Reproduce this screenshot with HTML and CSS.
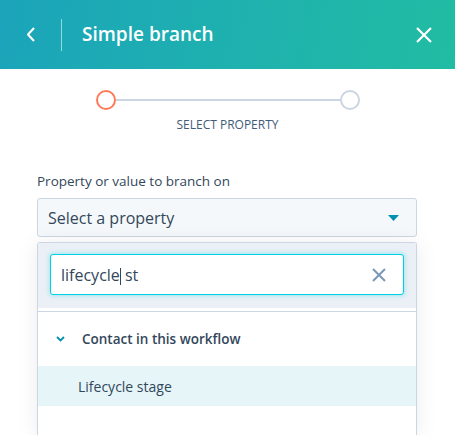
FILE: index.html
```html
<!DOCTYPE html>
<html lang="en">
<head>
<meta charset="utf-8">
<title>Simple branch</title>
<link rel="stylesheet" href="styles.css">
</head>
<body>
<header class="header">
  <button class="back" aria-label="Back">
    <svg width="8" height="15" viewBox="0 0 8 15"><path d="M7 1 L1 7.5 L7 14" fill="none" stroke="#fff" stroke-width="2" stroke-linejoin="miter"/></svg>
  </button>
  <span class="divider"></span>
  <h1 class="title">Simple branch</h1>
  <button class="close" aria-label="Close">
    <svg width="16" height="16" viewBox="0 0 16 16"><path d="M1 1 L15 15 M15 1 L1 15" stroke="#fff" stroke-width="2.2" fill="none"/></svg>
  </button>
</header>
<main class="panel">
  <div class="stepper">
    <div class="track">
      <span class="dot dot-active"></span>
      <span class="line"></span>
      <span class="dot"></span>
    </div>
    <div class="step-label">SELECT PROPERTY</div>
  </div>
  <label class="field-label">Property or value to branch on</label>
  <div class="select">
    <span>Select a property</span>
    <svg class="select-caret" width="11" height="6" viewBox="0 0 11 6"><path d="M0 0 H11 L5.5 6 Z" fill="#0091ae"/></svg>
  </div>
  <div class="dropdown">
    <div class="search-area">
      <div class="search">
        <span class="search-text">lifecycle<span class="caret"></span> st</span>
        <svg width="14" height="14" viewBox="0 0 14 14"><path d="M1 1 L13 13 M13 1 L1 13" stroke="#7c98b6" stroke-width="2" fill="none"/></svg>
      </div>
    </div>
    <div class="results">
      <div class="group">
        <svg class="chev" width="9" height="6" viewBox="0 0 9 6"><path d="M1 1 L4.5 4.5 L8 1" stroke="#0091ae" stroke-width="1.8" fill="none"/></svg>
        <span>Contact in this workflow</span>
      </div>
      <div class="option">Lifecycle stage</div>
      <div class="spacer"></div>
    </div>
  </div>
</main>
</body>
</html>
```
FILE: styles.css
```css
* { box-sizing: border-box; }
html, body { margin: 0; padding: 0; background: #fff; }
body {
  font-family: "Open Sans", "Liberation Sans", sans-serif;
  color: #33475b;
  overflow: hidden;
}
button { background: none; border: 0; padding: 0; cursor: pointer; }

.header {
  height: 69px;
  display: flex;
  align-items: center;
  padding: 0 23px 0 27px;
  background: linear-gradient(100deg, #1ba4ba 0%, #1fb3ad 60%, #21bca3 100%);
  color: #fff;
}
.back { width: 34px; height: 15px; display: flex; align-items: center; }
.back svg { display: block; }
.divider { width: 1px; height: 32px; background: rgba(255,255,255,0.55); }
.title {
  margin: 0 0 0 20px;
  font-size: 19px;
  font-weight: 600;
  line-height: 24px;
  flex: 1;
  position: relative;
  top: -1px;
}
.close { width: 16px; height: 16px; display: flex; }
.close svg { display: block; }

.panel { padding: 21px 38px 0 37px; }

.stepper { width: 265px; margin: 0 auto; padding-left: 1px; }
.track { display: flex; align-items: center; height: 20px; }
.dot {
  width: 20px; height: 20px; border-radius: 50%;
  border: 2px solid #cbd6e2; flex: none;
}
.dot-active { border-color: #ff7a59; }
.line { flex: 1; height: 2.5px; background: #cbd6e2; }
.step-label {
  margin-top: 7px;
  text-align: center;
  font-size: 12px;
  line-height: 16px;
  color: #425b76;
}

.field-label {
  display: block;
  margin-top: 39px;
  font-size: 13.5px;
  line-height: 18px;
  color: #33475b;
}
.select {
  margin-top: 8px;
  height: 39px;
  border: 1px solid #cbd6e2;
  border-radius: 3px;
  background: #f5f8fa;
  display: flex;
  align-items: center;
  justify-content: space-between;
  padding: 0 17px 0 10px;
  font-size: 16px;
}
.select-caret { display: block; margin-top: 1px; }

.dropdown {
  margin-top: 5px;
  border: 1px solid #cbd6e2;
  border-bottom: 0;
  border-radius: 3px 3px 0 0;
  background: #fff;
  box-shadow: 0 2px 22px rgba(0, 0, 0, 0.08);
}
.search-area {
  background: #eaf0f6;
  padding: 11px 12px 13px;
}
.search {
  height: 41px;
  background: #fff;
  border: 1px solid #00d0e4;
  border-radius: 3px;
  box-shadow: 0 0 4px 1px rgba(0, 208, 228, 0.3);
  display: flex;
  align-items: center;
  justify-content: space-between;
  padding: 0 17px 0 10px;
  font-size: 16px;
}
.search svg { display: block; }
.caret {
  display: inline-block;
  width: 1px;
  height: 17px;
  background: #33475b;
  vertical-align: -4px;
}
.results {
  margin-top: 3px;
  border-top: 1px solid #cbd6e2;
}
.group {
  height: 54px;
  display: flex;
  align-items: center;
  padding-left: 18px;
  font-size: 13.5px;
  font-weight: 600;
}
.chev { display: block; margin-right: 17px; }
.option {
  height: 40px;
  display: flex;
  align-items: center;
  padding-left: 40px;
  background: #e5f5f8;
  font-size: 14px;
}
.spacer { height: 29px; }
```
